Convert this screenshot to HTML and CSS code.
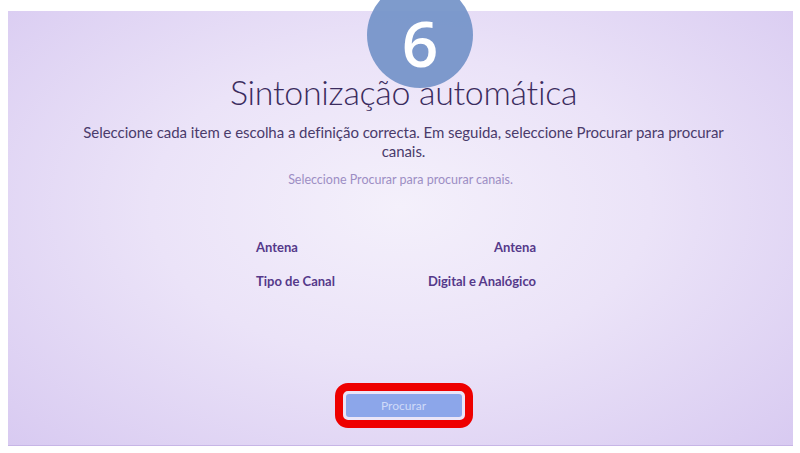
FILE: index.html
```html
<!DOCTYPE html>
<html lang="pt">
<head>
  <meta charset="UTF-8">
  <meta name="viewport" content="width=device-width, initial-scale=1.0">
  <title>Sintonização automática</title>
  <link rel="stylesheet" href="styles.css">
</head>
<body>
  <div class="screen">
    <div class="step">6</div>
    <h1 class="title">Sintonização automática</h1>
    <p class="desc">Seleccione cada item e escolha a definição correcta. Em seguida, seleccione Procurar para procurar canais.</p>
    <p class="hint">Seleccione Procurar para procurar canais.</p>

    <div class="settings">
      <div class="row"><span>Antena</span><span>Antena</span></div>
      <div class="row"><span>Tipo de Canal</span><span>Digital e Analógico</span></div>
    </div>

    <div class="actions">
      <div class="highlight">
        <button class="search-btn">Procurar</button>
      </div>
    </div>
  </div>
</body>
</html>
```

FILE: styles.css
```css
html, body { margin: 0; background: #fff; }
body { font-family: 'Lato', 'Open Sans', sans-serif; padding: 11px 7px 7px 8px; }
.screen { position: relative; height: 435px; box-sizing: border-box; padding-top: 61px; text-align: center;
  background: radial-gradient(ellipse at 50% 45%, #f4f0fb 0%, #ebe3f8 45%, #d8caf1 100%);
  border-bottom: 1px solid #c7b5e6; }
.step { position: absolute; left: 359px; top: -29px; width: 106px; height: 106px; border-radius: 50%;
  background: rgba(115, 146, 200, 0.92); color: #fff; font-family: 'Open Sans', sans-serif; font-weight: 600;
  font-size: 64px; line-height: 106px; padding-top: 8px; box-sizing: border-box; }
.title { margin: 0 0 0 6px; font-weight: 300; font-size: 34px; line-height: 40px; color: #3b2c5e; letter-spacing: -0.3px; position: relative; }
.desc { margin: 11px auto 0; width: 660px; padding-left: 6px; font-size: 15px; letter-spacing: -0.05px; line-height: 19px; color: #4a3b6b; }
.hint { margin: 11px 0 0; font-size: 12.5px; color: #9d8ec4; }
.settings { width: 280px; padding-right: 9px; margin: 52px auto 0; }
.row { display: flex; justify-content: space-between; font-size: 13px; font-weight: 700; color: #55398a; line-height: 16px; margin-bottom: 18px; }
.actions { margin-top: 94px; padding-left: 6px; display: flex; justify-content: center; }
.highlight { border: 8px solid #ee0000; border-radius: 13px; padding: 3px; background: #ebe5f8; }
.search-btn { display: block; width: 116px; height: 23px; border: none; border-radius: 3px; background: #8ca6ea; color: #cfdaf8;
  font-family: 'Lato', sans-serif; font-size: 12px; padding: 0; }
```
